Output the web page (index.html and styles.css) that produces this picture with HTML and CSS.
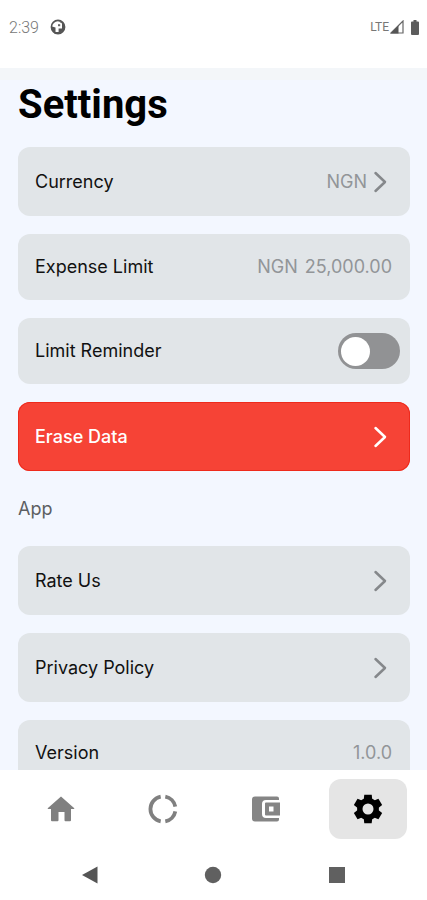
FILE: index.html
```html
<!DOCTYPE html>
<html lang="en">
<head>
<meta charset="utf-8">
<meta name="viewport" content="width=device-width, initial-scale=1">
<title>Settings</title>
<link rel="stylesheet" href="styles.css">
</head>
<body>
<header class="status">
  <span class="time">2:39</span>
  <svg class="app-mark" viewBox="0 0 16 16" width="16" height="16" aria-hidden="true">
    <circle cx="8" cy="8" r="6.600" fill="none" stroke="#555" stroke-width="1.600"/>
    <path d="M8.600 9.500H12V4.500L8 2 14 4v7l-5 4H5L2 11V7.500l3.500 1V13h3.100z" fill="#555"/>
    <path d="M8 5.200h2.200v2H8z" fill="#666"/>
  </svg>
  <span class="network">LTE</span>
  <svg class="signal" viewBox="0 0 14 14" width="14" height="14" aria-hidden="true">
    <path d="M1 13 13 1v12z" fill="#fff" stroke="#666" stroke-width="1.2"/>
    <path d="M.5 13.500 8.500 5.500v8z" fill="#555"/>
  </svg>
  <svg class="battery" viewBox="0 0 8 15" width="8" height="15" aria-hidden="true">
    <path d="M2.500 0h3v1.500H7q1 0 1 1V14q0 1-1 1H1q-1 0-1-1V2.500q0-1 1-1h1.500z" fill="#5c5c5c"/>
  </svg>
</header>

<main class="content">
  <h1 class="title">Settings</h1>
  <section class="group">
    <button class="row tall" type="button">
      <span>Currency</span>
      <span class="value with-chevron">NGN
        <svg class="chevron" viewBox="0 0 14 22" width="14" height="22" aria-hidden="true"><path d="M2.500 2 12 11 2.500 20"/></svg>
      </span>
    </button>
    <button class="row" type="button">
      <span>Expense Limit</span>
      <span class="value amount"><span>NGN</span><span>25,000.00</span></span>
    </button>
    <div class="row switch-row">
      <label for="reminder">Limit Reminder</label>
      <input class="switch" id="reminder" type="checkbox" role="switch">
    </div>
    <button class="row tall danger" type="button">
      <span>Erase Data</span>
      <span class="value with-chevron">
        <svg class="chevron" viewBox="0 0 14 22" width="14" height="22" aria-hidden="true"><path d="M2.500 2 12 11 2.500 20"/></svg>
      </span>
    </button>
  </section>
  <h2 class="subtitle">App</h2>
  <section class="group">
    <a class="row tall" href="#rate">
      <span>Rate Us</span>
      <span class="value with-chevron">
        <svg class="chevron" viewBox="0 0 14 22" width="14" height="22" aria-hidden="true"><path d="M2.500 2 12 11 2.500 20"/></svg>
      </span>
    </a>
    <a class="row tall" href="#privacy">
      <span>Privacy Policy</span>
      <span class="value with-chevron">
        <svg class="chevron" viewBox="0 0 14 22" width="14" height="22" aria-hidden="true"><path d="M2.500 2 12 11 2.500 20"/></svg>
      </span>
    </a>
    <div class="row">
      <span>Version</span>
      <span class="value">1.0.0</span>
    </div>
  </section>
</main>

<nav class="tabs" aria-label="Main">
  <a class="tab" href="#home" aria-label="Home">
    <svg viewBox="0 0 30 30" width="30" height="30"><path d="M15 2.500 28.300 14.300q.3.700-.5.700H25v11.200q0 1-1 1h-4.500q-1 0-1-1V18h-6v8.200q0 1-1 1H6q-1 0-1-1V15H2.200q-.8 0-.5-.7z" fill="#808080"/></svg>
  </a>
  <a class="tab" href="#stats" aria-label="Statistics">
    <svg viewBox="0 0 30 30" width="30" height="30" fill="none" stroke="#808080" stroke-width="3.800"><path d="M12.700 2.700A12.500 12.500 0 0 0 12.700 27.300M17.300 2.700A12.500 12.500 0 0 1 27.300 12.700M27.300 17.300A12.500 12.500 0 0 1 17.300 27.300"/></svg>
  </a>
  <a class="tab" href="#wallet" aria-label="Wallet">
    <svg viewBox="0 0 30 30" width="30" height="30"><path d="M4 2.500h22q2 0 2 2v1.500H15q-4 0-4 4v10q0 4 4 4h13v1.500q0 2-2 2H4q-3 0-3-3v-19q0-3 3-3z" fill="#858585"/><path fill-rule="evenodd" d="M15 8.500h14v13H15q-1 0-1-1v-11q0-1 1-1zm3 4v5h4.500v-5z" fill="#858585"/></svg>
  </a>
  <a class="tab active" href="#settings" aria-label="Settings" aria-current="page">
    <svg viewBox="0 0 30 30" width="30" height="30">
      <circle cx="15" cy="15" r="8.200" fill="none" stroke="#000" stroke-width="5.400"/>
      <g fill="#000">
        <path id="tooth" d="M10.500 7.500 11.300.800h7.400L19.500 7.500z"/>
        <use href="#tooth" transform="rotate(60 15 15)"/>
        <use href="#tooth" transform="rotate(120 15 15)"/>
        <use href="#tooth" transform="rotate(180 15 15)"/>
        <use href="#tooth" transform="rotate(240 15 15)"/>
        <use href="#tooth" transform="rotate(300 15 15)"/>
      </g>
    </svg>
  </a>
</nav>

<footer class="system">
  <button class="key" type="button" aria-label="Back"><svg viewBox="0 0 18 18" width="18" height="18"><path d="M1 9 16.500.500v17z" fill="#555"/></svg></button>
  <button class="key" type="button" aria-label="Home screen"><svg viewBox="0 0 18 18" width="18" height="18"><circle cx="9" cy="9" r="8.200" fill="#606060"/></svg></button>
  <button class="key" type="button" aria-label="Recent apps"><svg viewBox="0 0 18 18" width="18" height="18"><path d="M1 1h16v16H1z" fill="#606060"/></svg></button>
</footer>
</body>
</html>
```
FILE: styles.css
```css
* {
  box-sizing: border-box;
}

body {
  margin: 0;
  height: 100vh;
  display: flex;
  flex-direction: column;
  background: #fff;
  color: #111;
  font-family: Inter, "Liberation Sans", sans-serif;
}

.status {
  display: flex;
  align-items: center;
  height: 68px;
  padding: 0 8px 14px 9px;
  flex: none;
  color: #777;
  font-family: Roboto, sans-serif;
  font-weight: 300;
}

.time {
  font-size: 16px;
}

.app-mark {
  margin-left: 11px;
}

.network {
  margin-left: auto;
  font-size: 12px;
  font-weight: 400;
}

.signal {
  margin-left: 1px;
}

.battery {
  margin-left: 7px;
}

.content {
  flex: 1;
  min-height: 0;
  overflow: hidden;
  padding: 13px 17px 0 18px;
  background: linear-gradient(#f3f6f9 12px, #f3f7ff 12px);
}

.title {
  margin: 0 0 18px;
  font: 700 40px/48px Roboto, sans-serif;
  color: #000;
}

.group {
  display: flex;
  flex-direction: column;
  gap: 18px;
}

.row {
  display: flex;
  align-items: center;
  justify-content: space-between;
  width: 100%;
  min-height: 66px;
  padding: 0 18px 0 17px;
  border: 0;
  border-radius: 12px;
  background: #e1e5e8;
  color: #111;
  font: 400 18px/24px Inter, "Liberation Sans", sans-serif;
  text-align: left;
  text-decoration: none;
}

.tall {
  min-height: 69px;
}

.switch-row {
  padding-right: 10px;
}

.danger {
  background: #f64336;
  color: #fff;
  font-weight: 500;
  box-shadow: inset 0 0 0 1px #ee2a1c;
}

.value {
  color: #929598;
}

.amount {
  display: flex;
  gap: 7px;
}

.with-chevron {
  display: flex;
  align-items: center;
  gap: 6px;
  padding-right: 5px;
}

.chevron {
  fill: none;
  stroke: #85888b;
  stroke-width: 2.5;
  stroke-linecap: round;
  stroke-linejoin: round;
}

.danger .chevron {
  stroke: #fff;
}

.switch {
  appearance: none;
  display: flex;
  align-items: center;
  width: 62px;
  height: 36px;
  margin: 0;
  padding: 0 3px;
  border-radius: 18px;
  background: #919294;
}

.switch::before {
  content: "";
  width: 29px;
  height: 29px;
  border-radius: 50%;
  background: #fff;
}

.switch:checked {
  justify-content: flex-end;
}

.subtitle {
  margin: 26px 0 25px;
  font-size: 18px;
  line-height: 24px;
  font-weight: 400;
  color: #5c5f63;
}

.tabs {
  display: grid;
  grid-template-columns: repeat(4, 78px);
  justify-content: space-between;
  flex: none;
  padding: 9px 20px 10px 22px;
  background: #fff;
}

.tab {
  display: flex;
  align-items: center;
  justify-content: center;
  height: 60px;
  border-radius: 12px;
}

.active {
  background: #e5e5e5;
}

.system {
  display: flex;
  justify-content: space-around;
  align-items: center;
  flex: none;
  height: 51px;
  padding: 0 28px;
}

.key {
  display: flex;
  padding: 0;
  border: 0;
  background: none;
}
```
